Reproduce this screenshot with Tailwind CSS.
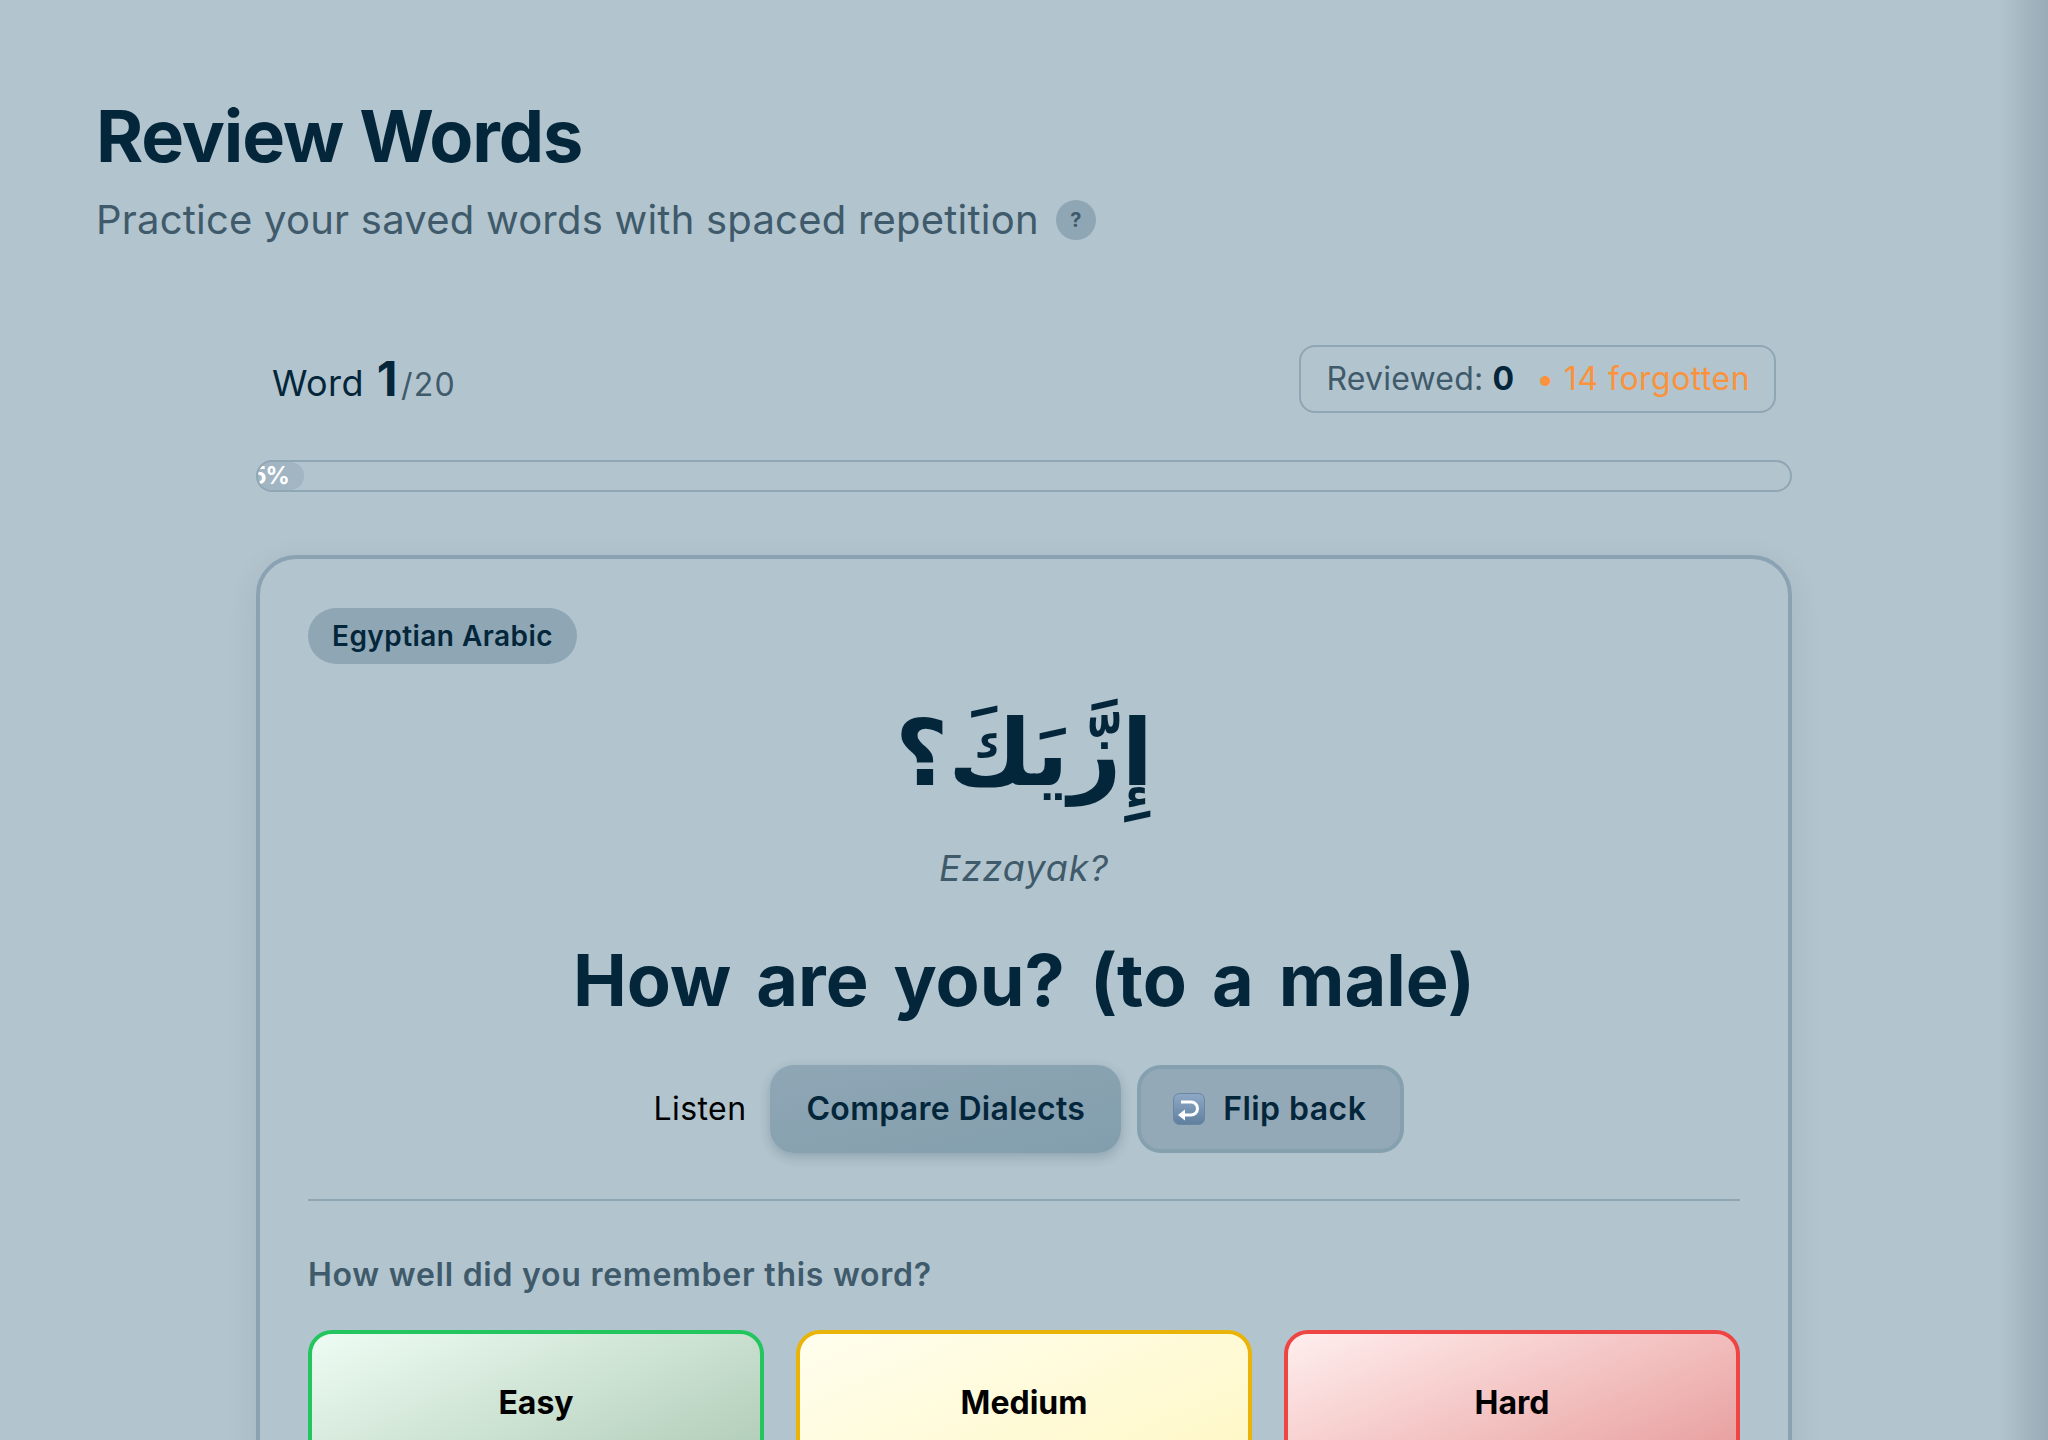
<!DOCTYPE html>
<html lang="en">
<head>
    <meta charset="UTF-8">
    <title>Review Words</title>
    <script src="https://cdn.jsdelivr.net/npm/@tailwindcss/browser@4"></script>
</head>
<body class="h-[1440px] overflow-hidden bg-[#b2c4ce] font-['Inter','DejaVu_Sans',sans-serif] text-[#03263b]">
    <div class="relative h-[1440px] overflow-hidden">
        <!-- edge shadow of the drawer on the right -->
        <div class="absolute right-0 top-0 h-full w-[48px] bg-gradient-to-r from-transparent to-[#98abb6]"></div>

        <main class="px-[96px] pt-[96px]">
            <h1 class="text-[72px] leading-[80px] font-bold tracking-[-1.1px]">Review Words</h1>
            <div class="mt-[14px] flex items-center gap-[17px]">
                <p class="text-[40px] leading-[60px] tracking-[0.22px] text-[#3f5a6a]">Practice your saved words with spaced repetition</p>
                <span class="flex h-[40px] w-[40px] items-center justify-center rounded-full bg-[#8fa6b5] text-[20px] font-bold text-[#3f5a6a]">?</span>
            </div>

            <section class="mx-auto mt-[93px] w-[1536px]">
                <div class="flex items-center justify-between px-[16px]">
                    <div class="flex items-baseline text-[36px] tracking-[0.4px]">
                        <span>Word</span>
                        <span class="ml-[13px] text-[48px] font-bold">1</span>
                        <span class="ml-[3px] text-[32px] tracking-[1.2px] text-[#3f5a6a]">/20</span>
                    </div>
                    <div class="flex h-[68px] items-center rounded-[16px] border-2 border-[#8fa6b5] pl-[26px] pr-[24px] text-[32px] tracking-[0.2px] text-[#3f5a6a]">
                        <span>Reviewed:</span>
                        <b class="ml-[9px] font-bold text-[#03263b]">0</b>
                        <span class="ml-[22px] tracking-[0.45px] text-[#fb923c]">• 14 forgotten</span>
                    </div>
                </div>

                <div class="mt-[45px] h-[32px] overflow-hidden rounded-full border-2 border-[#8fa6b5]">
                    <div class="flex h-full w-[46px] items-center justify-end overflow-hidden rounded-full bg-[#8fa6b5]/50 pr-[15px] text-[24px] font-bold tracking-[-1px] whitespace-nowrap text-white">5%</div>
                </div>

                <div class="mt-[63px] rounded-[40px] border-4 border-[#8aa2b2] px-[48px] pb-[48px] pt-[49px] shadow-[0_8px_32px_rgba(3,38,59,0.08)]">
                    <span class="inline-flex h-[56px] items-center rounded-full bg-[#8fa6b5] px-[24px] text-[28px] font-semibold tracking-[0.45px]">Egyptian Arabic</span>

                    <div class="mt-[9px] text-center">
                        <div dir="rtl" class="text-[92px] leading-[162px] font-bold font-['DejaVu_Sans',sans-serif]">إِزَّيَكَ؟</div>
                        <div class="mt-[6px] text-[36px] leading-[54px] tracking-[0.95px] italic text-[#3f5a6a]">Ezzayak?</div>
                        <h2 class="mt-[35px] text-[72px] leading-[100px] font-bold [word-spacing:8px]">How are you? (to a male)</h2>
                    </div>

                    <div class="mt-[35px] flex items-center justify-center gap-[16px] pl-[10px]">
                        <span class="mr-[8px] text-[32px] tracking-[0.4px] text-black">Listen</span>
                        <button class="flex h-[88px] items-center rounded-[24px] bg-gradient-to-br from-[#8fa6b5] to-[#829eac] px-[36px] text-[32px] font-semibold tracking-[0.3px] shadow-[0_4px_12px_rgba(3,38,59,0.2)]">Compare Dialects</button>
                        <button class="flex h-[88px] items-center gap-[18px] rounded-[24px] border-4 border-[#85a0af] bg-[#94a9b7] pl-[32px] pr-[34px] text-[32px] font-semibold tracking-[0.45px]">
                            <svg class="h-[32px] w-[32px]" viewBox="0 0 32 32">
                                <defs>
                                    <linearGradient id="key" x1="0" y1="0" x2="0" y2="1">
                                        <stop offset="0" stop-color="#8ea9c6"/>
                                        <stop offset="1" stop-color="#5f7f9f"/>
                                    </linearGradient>
                                </defs>
                                <rect x="0.5" y="0.5" width="31" height="31" rx="6" fill="url(#key)" stroke="#6b86a0"/>
                                <path d="M8 9h10a5.5 5.5 0 0 1 0 13h-8" fill="none" stroke="#fff" stroke-width="3"/>
                                <path d="M12 16.5v11l-7-5.5z" fill="#fff"/>
                            </svg>
                            Flip back
                        </button>
                    </div>

                    <div class="mt-[46px] border-t-2 border-[#8fa6b5]"></div>

                    <p class="mt-[50px] text-[32px] font-semibold tracking-[0.75px] text-[#3f5a6a]">How well did you remember this word?</p>

                    <div class="mt-[31px] grid grid-cols-3 gap-[32px] text-[32px] font-bold text-black">
                        <button class="h-[200px] rounded-[24px] border-4 border-[#22c55e] bg-gradient-to-br from-[#eefcf3] to-[#a3c2ab] pb-[54px]">Easy</button>
                        <button class="h-[200px] rounded-[24px] border-4 border-[#eab308] bg-gradient-to-br from-[#fffeee] to-[#fef6bd] pb-[54px]">Medium</button>
                        <button class="h-[200px] rounded-[24px] border-4 border-[#ef4444] bg-gradient-to-br from-[#feeeee] to-[#e08c8c] pb-[54px]">Hard</button>
                    </div>
                </div>
            </section>
        </main>
    </div>
</body>
</html>
